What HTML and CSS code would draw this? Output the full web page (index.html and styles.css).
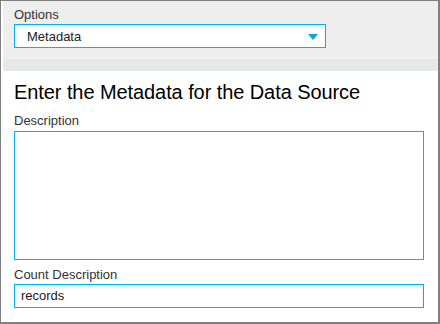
FILE: index.html
```html
<!DOCTYPE html>
<html>
<head>
<meta charset="utf-8">
<link rel="stylesheet" href="styles.css">
</head>
<body>
<div class="frame">
  <div class="header">
    <label class="label">Options</label>
    <div class="select">
      <span class="select-text">Metadata</span>
      <svg class="arrow" width="10" height="6" viewBox="0 0 10 6"><polygon points="0,0 10,0 5,6" fill="#0aa6dc"/></svg>
    </div>
  </div>
  <div class="body">
    <h1 class="title">Enter the Metadata for the Data Source</h1>
    <label class="label">Description</label>
    <div class="textarea"></div>
    <label class="label label-count">Count Description</label>
    <div class="input">records</div>
  </div>
</div>
</body>
</html>
```
FILE: styles.css
```css
html, body { margin: 0; padding: 0; background: #fff; }
body { font-family: "Liberation Sans", Arial, sans-serif; }
.frame {
  width: 440px; height: 324px; box-sizing: border-box;
  border-style: solid; border-color: #808080;
  border-width: 1px 2px 2px 1px;
  padding: 0 0 0 2px;
  display: flex; flex-direction: column;
}
.header {
  background: #eeeeee;
  padding: 6px 0 11px 11px;
  border-bottom: 12px solid #e6e7e9;
  display: flex; flex-direction: column;
}
.label { display: block; font-size: 13px; color: #333; line-height: 16px; }
.select {
  margin-top: 1px;
  width: 312px; height: 24px; box-sizing: border-box;
  border: 1px solid #00b4e6; background: #fff;
  display: flex; align-items: center; justify-content: space-between;
  padding: 0 7px 0 12px;
  box-shadow: inset 0 2px 3px rgba(0,0,0,0.08);
}
.select-text { font-size: 13px; color: #222; }
.arrow { display: block; margin-top: 1px; }
.body { padding: 8px 14px 0 11px; display: flex; flex-direction: column; }
.title { margin: 0; font-weight: normal; font-size: 20px; line-height: 26px; color: #000; letter-spacing: -0.08px; }
.body .label { margin-top: 8px; }
.body .label-count { margin-top: 7px; }
.textarea {
  margin-top: 2px;
  height: 129px; box-sizing: border-box;
  border: 1px solid #00b4e6; background: #fff;
}
.input {
  margin-top: 1px;
  height: 24px; box-sizing: border-box;
  border: 1px solid #00b4e6; background: #fff;
  font-size: 13px; color: #222; line-height: 22px; padding-left: 6px;
  box-shadow: inset 0 3px 3px rgba(0,0,0,0.08);
}
```
